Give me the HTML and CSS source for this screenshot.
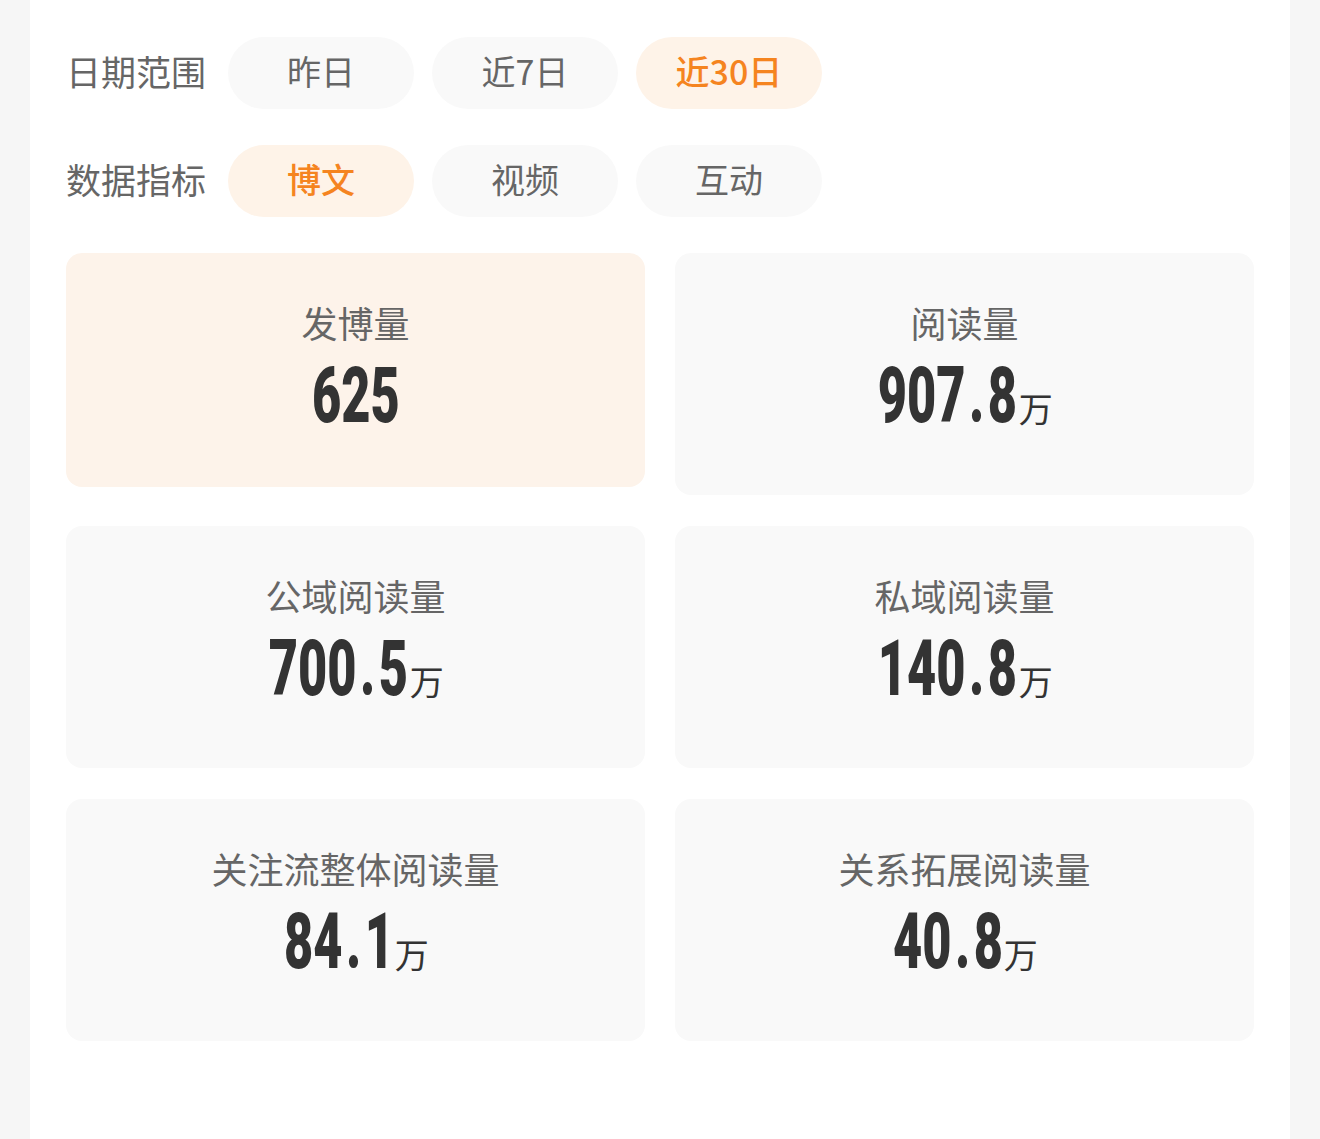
FILE: index.html
```html
<!DOCTYPE html>
<html lang="zh-CN">
<head>
<meta charset="utf-8">
<title>数据概览</title>
<link rel="stylesheet" href="styles.css">
</head>
<body>
<div class="panel">
  <div class="filter-row">
    <div class="filter-label">日期范围</div>
    <div class="pills">
      <div class="pill">昨日</div>
      <div class="pill">近7日</div>
      <div class="pill active">近30日</div>
    </div>
  </div>
  <div class="filter-row">
    <div class="filter-label">数据指标</div>
    <div class="pills">
      <div class="pill active">博文</div>
      <div class="pill">视频</div>
      <div class="pill">互动</div>
    </div>
  </div>

  <div class="cards">
    <div class="card active">
      <div class="card-label">发博量</div>
      <div class="card-value"><span class="num" style="--n:3;--p:0">625</span></div>
    </div>
    <div class="card">
      <div class="card-label">阅读量</div>
      <div class="card-value"><span class="num" style="--n:4;--p:1">907<span class="pt">.</span>8</span><span class="unit">万</span></div>
    </div>
    <div class="card">
      <div class="card-label">公域阅读量</div>
      <div class="card-value"><span class="num" style="--n:4;--p:1">700<span class="pt">.</span>5</span><span class="unit">万</span></div>
    </div>
    <div class="card">
      <div class="card-label">私域阅读量</div>
      <div class="card-value"><span class="num" style="--n:4;--p:1">140<span class="pt">.</span>8</span><span class="unit">万</span></div>
    </div>
    <div class="card">
      <div class="card-label">关注流整体阅读量</div>
      <div class="card-value"><span class="num" style="--n:3;--p:1">84<span class="pt">.</span>1</span><span class="unit">万</span></div>
    </div>
    <div class="card">
      <div class="card-label">关系拓展阅读量</div>
      <div class="card-value"><span class="num" style="--n:3;--p:1">40<span class="pt">.</span>8</span><span class="unit">万</span></div>
    </div>
  </div>
</div>
</body>
</html>
```

FILE: styles.css
```css
* { box-sizing: border-box; }

html, body {
  margin: 0;
  padding: 0;
  background: #f6f6f6;
}

body {
  font-family: "Noto Sans CJK SC", "Noto Sans", sans-serif;
  color: #666;
}

.panel {
  margin: 0 30px;
  min-height: 1139px;
  background: #ffffff;
  padding: 37px 36px 0 36px;
}

.filter-row {
  display: flex;
  align-items: flex-start;
  height: 72px;
  margin-bottom: 36px;
}

.filter-label {
  width: 162px;
  flex: none;
  font-size: 35px;
  line-height: 67px;
  color: #666;
  white-space: nowrap;
}

.pills {
  display: flex;
  gap: 18px;
}

.pill {
  width: 186px;
  height: 72px;
  border-radius: 36px;
  background: #f9f9f9;
  color: #666;
  font-size: 34px;
  line-height: 68px;
  text-align: center;
}

.pill.active {
  background: #fef3e8;
  color: #f5841f;
  font-weight: 500;
}

.cards {
  display: grid;
  grid-template-columns: 579px 579px;
  grid-auto-rows: 242px;
  column-gap: 30px;
  row-gap: 31px;
}

.card {
  background: #f9f9f9;
  border-radius: 16px;
  display: flex;
  flex-direction: column;
  align-items: center;
  padding-top: 47px;
}

.card.active {
  background: #fdf3ea;
  height: 234px;
}

.card-label {
  font-size: 36px;
  line-height: 44px;
  color: #666;
  white-space: nowrap;
}

.card-value {
  margin-top: 12px;
  display: flex;
  align-items: baseline;
  justify-content: center;
  height: 80px;
  line-height: 80px;
  color: #333;
}

.num {
  display: inline-block;
  font-family: Roboto, "Liberation Sans", sans-serif;
  font-weight: 900;
  font-size: 77px;
  line-height: 80px;
  transform: scaleX(0.655);
  transform-origin: center center;
  /* compensate layout width for the horizontal scale */
  margin: 0 calc((var(--n) * 0.5615em + var(--p) * 0.403em) * -0.1725);
}

.pt {
  padding: 0 0.07em;
}

.unit {
  font-size: 34px;
  color: #333;
  margin-left: 0;
}
```
